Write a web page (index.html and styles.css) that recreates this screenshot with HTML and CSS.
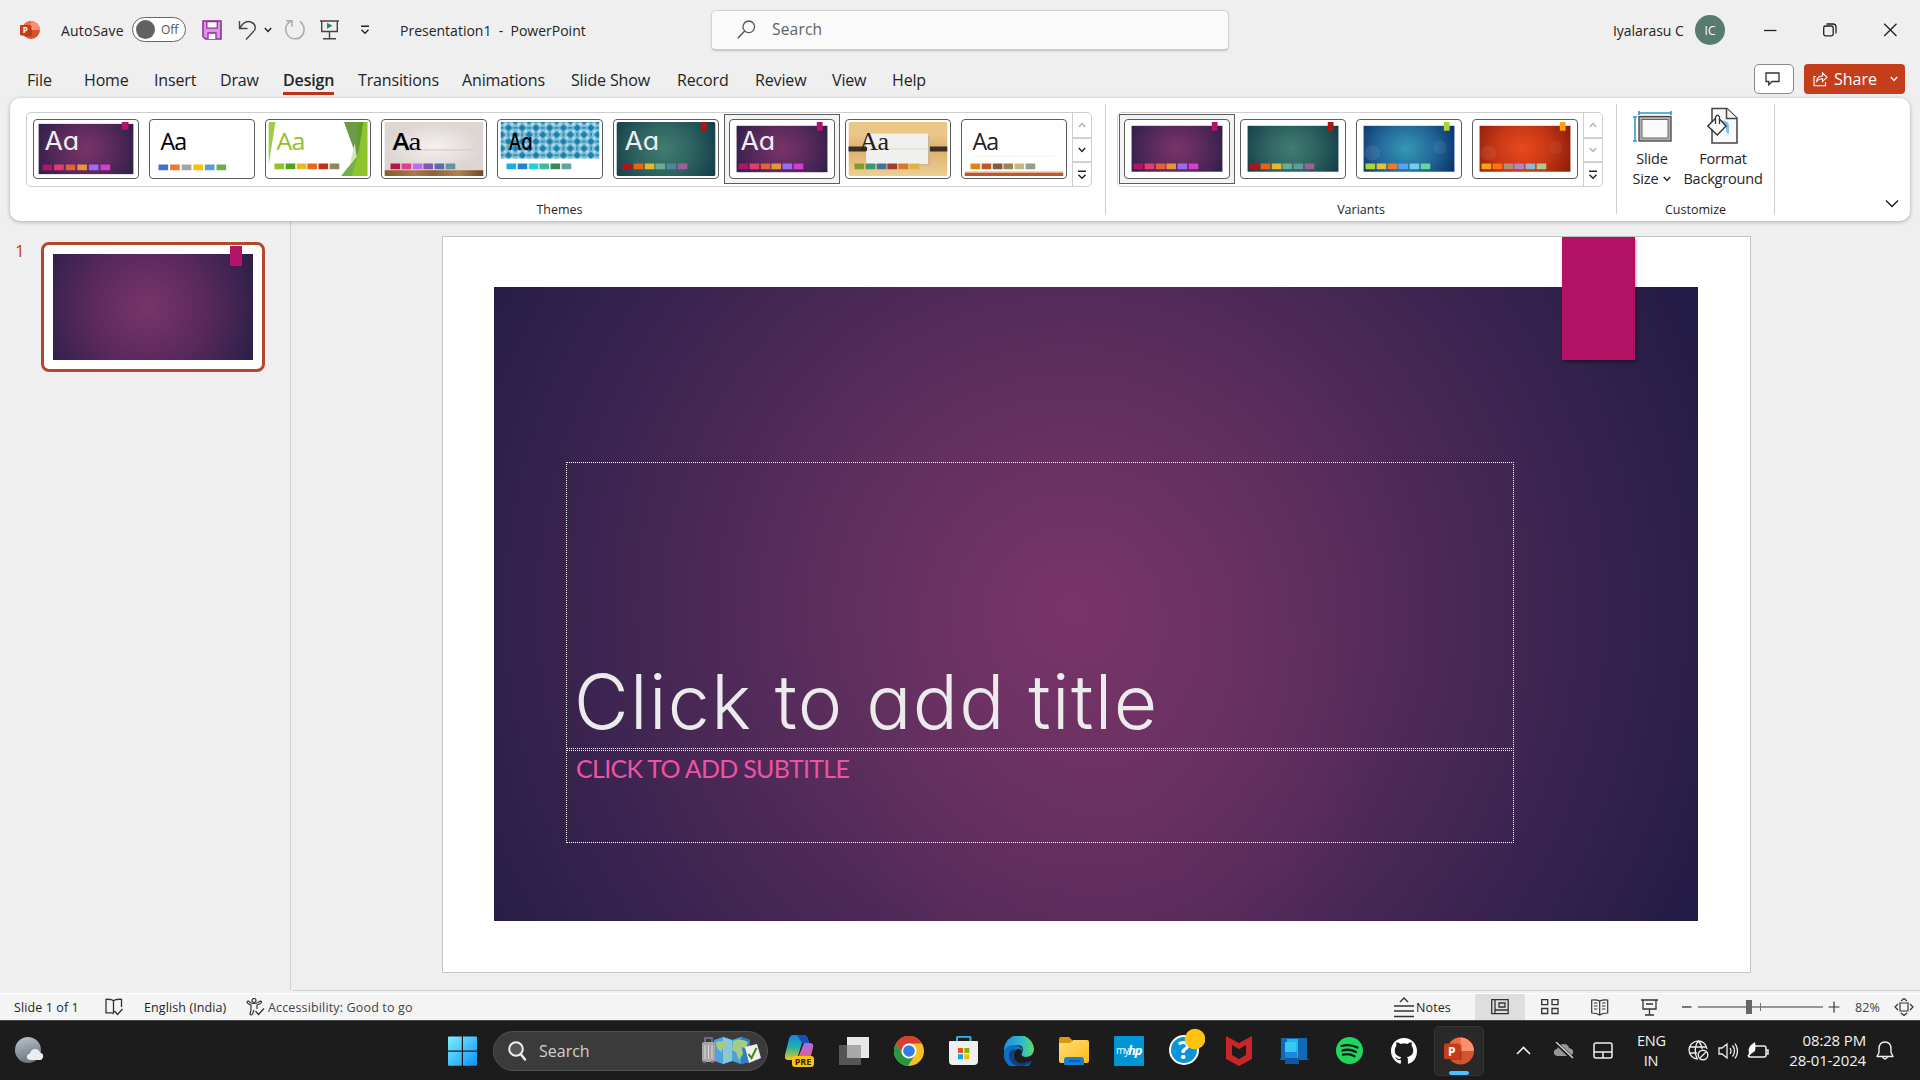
FILE: index.html
```html
<!DOCTYPE html>
<html lang="en">
<head>
<meta charset="utf-8">
<title>Presentation1 - PowerPoint</title>
<link rel="stylesheet" href="styles.css">
</head>
<body>
<svg class="defs" width="0" height="0" aria-hidden="true">
  <defs>
    <radialGradient id="purple" cx=".5" cy=".5" r=".6" gradientTransform="translate(0 -.35) scale(1 1.7)"><stop offset="0" stop-color="#79346a"/><stop offset=".5" stop-color="#59295b"/><stop offset="1" stop-color="#2a1f48"/></radialGradient>
    <radialGradient id="teal" cx=".48" cy=".5" r=".6" gradientTransform="translate(0 -.35) scale(1 1.7)"><stop offset="0" stop-color="#417d70"/><stop offset=".5" stop-color="#2c615f"/><stop offset="1" stop-color="#123b48"/></radialGradient>
    <radialGradient id="blue" cx=".47" cy=".5" r=".6" gradientTransform="translate(0 -.35) scale(1 1.7)"><stop offset="0" stop-color="#3499b3"/><stop offset=".5" stop-color="#23699a"/><stop offset="1" stop-color="#0c306c"/></radialGradient>
    <radialGradient id="red" cx=".47" cy=".5" r=".6" gradientTransform="translate(0 -.35) scale(1 1.7)"><stop offset="0" stop-color="#e84a1e"/><stop offset=".5" stop-color="#c73715"/><stop offset="1" stop-color="#8a1c06"/></radialGradient>
    <linearGradient id="wood"><stop offset="0" stop-color="#8a5a30"/><stop offset=".3" stop-color="#a9794a"/><stop offset=".5" stop-color="#8c6238"/><stop offset=".75" stop-color="#ad8352"/><stop offset="1" stop-color="#704620"/></linearGradient>
    <radialGradient id="plaster"><stop offset="0" stop-color="#f4f1ef"/><stop offset="1" stop-color="#dcd5d2"/></radialGradient>
    <linearGradient id="maple" x2="0" y2="1"><stop offset="0" stop-color="#e9c787"/><stop offset=".25" stop-color="#ebc689"/><stop offset=".5" stop-color="#e0ae6c"/><stop offset="1" stop-color="#edcf94"/></linearGradient>
    <pattern id="tiles" x="3" y="1" width="14.200" height="14.200" patternUnits="userSpaceOnUse"><rect width="14.200" height="14.200" fill="#86c0d8"/><path d="M7.100 3.200L11 7.100 7.100 11 3.200 7.100zM0-3.900L3.900 0 0 3.900zM14.200-3.900v7.800L10.300 0zM0 10.300l3.900 3.900L0 18.100zM14.200 10.300v7.800l-3.900-3.900z" fill="#1581ae"/><path d="M7.100-2v4M7.100 12v4M-2 7.100h4M12 7.100h4" stroke="#1581ae" stroke-width="1.500"/><circle cx="3.550" cy="3.550" r="1.100" fill="#e4f2f7"/><circle cx="10.650" cy="3.550" r="1.100" fill="#e4f2f7"/><circle cx="3.550" cy="10.650" r="1.100" fill="#e4f2f7"/><circle cx="10.650" cy="10.650" r="1.100" fill="#e4f2f7"/></pattern>
    <linearGradient id="win" x2="1" y2="1"><stop offset="0" stop-color="#7ff0ff"/><stop offset="1" stop-color="#0a92f8"/></linearGradient>
    <linearGradient id="edge1" x2="1" y2="0"><stop offset="0" stop-color="#1b8fd8"/><stop offset=".6" stop-color="#2fb9d2"/><stop offset="1" stop-color="#63dd58"/></linearGradient>
    <linearGradient id="moon" x2=".3" y2="1"><stop offset="0" stop-color="#bcc5cf"/><stop offset="1" stop-color="#6d7883"/></linearGradient>
    <linearGradient id="folder" x2="1" y2="1"><stop offset="0" stop-color="#ffdf7c"/><stop offset="1" stop-color="#ffb915"/></linearGradient>
    <linearGradient id="copA" x2="0" y2="1"><stop offset="0" stop-color="#1783e6"/><stop offset=".5" stop-color="#25b3a0"/><stop offset="1" stop-color="#f5c51c"/></linearGradient>
    <linearGradient id="copB" x2="0" y2="1"><stop offset="0" stop-color="#a66bf0"/><stop offset="1" stop-color="#f4625c"/></linearGradient>
    <symbol id="ppt" viewBox="0 0 30 30"><circle cx="16.500" cy="15" r="13.500" fill="#d35230"/><path d="M16.500 1.500A13.500 13.500 0 0 0 3 15h13.500z" fill="#ed6c47"/><path d="M16.500 1.500A13.500 13.500 0 0 1 30 15H16.500z" fill="#ff8f6b"/><rect x="2" y="8.500" width="15.500" height="15.500" rx="1" fill="#7d210e" opacity=".5"/><rect x="0" y="7.500" width="15.500" height="15.500" rx="1.500" fill="#c43e1c"/><text x="7.800" y="19.800" class="ppt-letter">P</text></symbol>
    <symbol id="down" viewBox="0 0 8 6"><path d="M.8 1L4 4.500 7.200 1" fill="none" stroke="currentColor" stroke-width="1.400"/></symbol>
    <symbol id="up" viewBox="0 0 8 6"><path d="M.8 5L4 1.500 7.200 5" fill="none" stroke="currentColor" stroke-width="1.400"/></symbol>
    <symbol id="more" viewBox="0 0 10 10"><path d="M1 1.200H9M1.500 4.700L5 8.300 8.500 4.700" fill="none" stroke="currentColor" stroke-width="1.400"/></symbol>
  </defs>
</svg>
<div class="app">
  <header class="titlebar">
    <svg class="i20" viewBox="0 0 30 30"><use href="#ppt"/></svg>
    <span class="autosave">AutoSave</span>
    <span class="toggle"><i></i>Off</span>
    <svg class="i20" viewBox="0 0 20 20"><path d="M1 1h18v18H3.500L1 16.500z" fill="#d79bdc" stroke="#932d9e" stroke-width="1.600"/><path d="M4.800 1.500h10.500v6.700H4.800z" fill="#fafafa" stroke="#932d9e" stroke-width="1.300"/><path d="M6 19v-6h8v6" fill="#fafafa" stroke="#932d9e" stroke-width="1.300"/></svg>
    <svg width="20" height="20" viewBox="0 0 20 20"><path d="M1.500 1v7.500h8M2 8C5 2.500 9 .5 13 2c5 2 5.500 7 2 10L8 19.500" fill="none" stroke="#444" stroke-width="1.400"/></svg>
    <svg width="8" height="6"><use href="#down"/></svg>
    <svg class="i20" viewBox="0 0 20 20"><path d="M1 .8h6v6M6.500 1C.5 3.500-.5 9.500 2 14c3 6 12 6.500 15.500 1 3-5 1.500-11-2.500-13.500" fill="none" stroke="#aaa" stroke-width="1.500"/></svg>
    <svg class="i20" viewBox="0 0 20 20"><path d="M0 1h19M1.700 1v10.500h15.600V1M9.500 12v6.500M3 18.700h13" fill="none" stroke="#444" stroke-width="1.400"/><path d="M7 2.800v6l5.500-3z" fill="#1f9349"/></svg>
    <svg width="10" height="10"><use href="#more"/></svg>
    <span class="doc-title">Presentation1&nbsp; -&nbsp; PowerPoint</span>
    <div class="search"><svg width="19" height="19" viewBox="0 0 19 19"><circle cx="11.800" cy="6.800" r="5.800" fill="none" stroke="#555" stroke-width="1.300"/><path d="M7.700 11L.8 18.200" stroke="#555" stroke-width="1.400"/></svg><span>Search</span></div>
    <span class="user">Iyalarasu C</span>
    <span class="avatar">IC</span>
    <svg width="13" height="13"><path d="M0 6.500h12.500" stroke="#222" stroke-width="1.300"/></svg>
    <svg width="14" height="14" viewBox="0 0 14 14"><rect x=".7" y="3" width="9.500" height="9.800" rx="1.800" fill="none" stroke="#222" stroke-width="1.300"/><path d="M3.500 1h6.500q3 0 3 3v6.500" fill="none" stroke="#222" stroke-width="1.300"/></svg>
    <svg width="14" height="14"><path d="M.2.700l12.300 12.300M12.500 .7L.2 13" stroke="#222" stroke-width="1.300"/></svg>
  </header>
  <div class="tabrow">
    <nav class="tabs"><span>File</span><span>Home</span><span>Insert</span><span>Draw</span><span class="active">Design</span><span>Transitions</span><span>Animations</span><span>Slide Show</span><span>Record</span><span>Review</span><span>View</span><span>Help</span></nav>
    <button class="comment"><svg width="16" height="14" viewBox="0 0 16 14"><path d="M1 1h13v8.500H7L3.800 12.800V9.500H1z" fill="none" stroke="#333" stroke-width="1.300"/></svg></button>
    <button class="share"><svg width="15" height="16" viewBox="0 0 15 16"><path d="M3 5.500H1v9.300h11.500V11M3.500 10.500C4 7 6 5 9.500 5V1.800L14 6.300 9.500 10.500V7.800c-3 0-4.500.8-6 2.700z" fill="none" stroke="#fff" stroke-width="1.100"/></svg><span>Share</span><svg class="chev" width="8" height="6"><use href="#down"/></svg></button>
  </div>
  <section class="ribbon">
    <div class="group themes">
      <div class="gallery">
        <div class="items">
          <div class="cell"><svg class="thumb" viewBox="0 0 106 60"><rect x="4" y="4" width="98" height="52" fill="url(#purple)"/><path fill="#b51368" d="M90 2h7v8h-7z"/><text class="aa gothic" x="10" y="31" fill="#eee" textLength="36" lengthAdjust="spacingAndGlyphs">Aa</text><path fill="#b51368" d="M8 46h10v6H8z"/><path fill="#e33d6f" d="M20 46h10v6H20z"/><path fill="#e45f3c" d="M32 46h10v6H32z"/><path fill="#e99436" d="M44 46h10v6H44z"/><path fill="#9b6bf2" d="M56 46h10v6H56z"/><path fill="#d53dd0" d="M68 46h10v6H68z"/></svg></div>
          <div class="cell"><svg class="thumb" viewBox="0 0 106 60"><text class="aa" x="10" y="31">Aa</text><path fill="#4472c4" d="M8 46h10v6H8z"/><path fill="#ed7d31" d="M20 46h10v6H20z"/><path fill="#a5a5a5" d="M32 46h10v6H32z"/><path fill="#ffc000" d="M44 46h10v6H44z"/><path fill="#5b9bd5" d="M56 46h10v6H56z"/><path fill="#70ad47" d="M68 46h10v6H68z"/></svg></div>
          <div class="cell"><svg class="thumb" viewBox="0 0 106 60"><path d="M2 2h7L2 46z" fill="#9fcc4b"/><path d="M80 2h24v56H77l16-20z" fill="#7fbe36"/><path d="M80 2h14l3 18-4 18z" fill="#6b9a4a"/><path d="M94 2h6l-6 34z" fill="#5b9e28"/><path d="M100 2h4v56H88l7-20z" fill="#90c42c"/><path d="M91 24l2 14-7 8z" fill="#d2e7b2"/><path d="M77 58l16-20-5 20z" fill="#71b04b"/><text class="aa medium" x="10" y="31" fill="#90c226" textLength="29" lengthAdjust="spacingAndGlyphs">Aa</text><path fill="#90c226" d="M8 45h10v6H8z"/><path fill="#54a021" d="M19.500 45h10v6h-10z"/><path fill="#e6b91e" d="M31 45h10v6H31z"/><path fill="#e76618" d="M42 45h10v6H42z"/><path fill="#c42f1a" d="M53.500 45h10v6h-10z"/><path fill="#918655" d="M65 45h10v6H65z"/></svg></div>
          <div class="cell"><svg class="thumb" viewBox="0 0 106 60"><path fill="url(#plaster)" d="M2 2h102v51H2z"/><path fill="url(#wood)" d="M2 52h102v6H2z"/><path d="M22 31h72" stroke="#e3bcc6"/><text class="aa bold" x="10" y="31" textLength="29" lengthAdjust="spacingAndGlyphs">A<tspan class="serif">a</tspan></text><path fill="#b31645" d="M8 45h10v6H8z"/><path fill="#dd3f8b" d="M19.500 45h10v6h-10z"/><path fill="#bb6cf5" d="M31 45h10v6H31z"/><path fill="#7b58a9" d="M42 45h10v6H42z"/><path fill="#5b6aa8" d="M53.500 45h10v6h-10z"/><path fill="#6592a4" d="M65 45h10v6H65z"/></svg></div>
          <div class="cell"><svg class="thumb" viewBox="0 0 106 60"><path fill="url(#tiles)" d="M2 2h102v38H2z"/><text class="aa single" x="10" y="31" textLength="25" lengthAdjust="spacingAndGlyphs">Aa</text><path fill="#1cade4" d="M8 45h10v6H8z"/><path fill="#2683c6" d="M19.500 45h10v6h-10z"/><path fill="#27ced7" d="M31 45h10v6H31z"/><path fill="#42ba97" d="M42 45h10v6H42z"/><path fill="#3e8853" d="M53.500 45h10v6h-10z"/><path fill="#62a39f" d="M65 45h10v6H65z"/></svg></div>
          <div class="cell"><svg class="thumb" viewBox="0 0 106 60"><rect x="2" y="2" width="102" height="56" rx="2" fill="url(#teal)"/><path fill="#b01513" d="M89 2h6v9h-6z"/><text class="aa gothic" x="10" y="31" fill="#eee" textLength="36" lengthAdjust="spacingAndGlyphs">Aa</text><path fill="#b01513" d="M8 45h10v6H8z"/><path fill="#ea6312" d="M19.500 45h10v6h-10z"/><path fill="#e6b729" d="M31 45h10v6H31z"/><path fill="#6aac90" d="M42 45h10v6H42z"/><path fill="#54849a" d="M53.500 45h10v6h-10z"/><path fill="#9e5e9b" d="M65 45h10v6H65z"/></svg></div>
          <div class="cell selected"><svg class="thumb" viewBox="0 0 106 60"><rect x="6" y="6" width="94" height="48" fill="url(#purple)"/><path fill="#b51368" d="M89 2h6v9h-6z"/><text class="aa gothic" x="10" y="31" fill="#eee" textLength="36" lengthAdjust="spacingAndGlyphs">Aa</text><path fill="#b51368" d="M8 45h10v6H8z"/><path fill="#e33d6f" d="M19.500 45h10v6h-10z"/><path fill="#e45f3c" d="M31 45h10v6H31z"/><path fill="#e99436" d="M42 45h10v6H42z"/><path fill="#9b6bf2" d="M53.500 45h10v6h-10z"/><path fill="#d53dd0" d="M65 45h10v6H65z"/></svg></div>
          <div class="cell"><svg class="thumb" viewBox="0 0 106 60"><rect x="2" y="2" width="102" height="56" rx="2" fill="url(#maple)"/><path d="M2 27.500h102v5H2z" fill="#3a302b"/><path d="M22 16h64v31H22z" fill="#c9b899"/><path d="M20 14h64v31.500H20z" fill="#f0f0ef"/><path d="M20 30h64" stroke="#d6d6d0"/><path d="M2 28h19v4H2z" fill="#3a302b"/><text class="aa serif" x="13" y="31" fill="#222">Aa</text><path fill="#83992a" d="M8 45h10v6H8z"/><path fill="#3c9770" d="M19.500 45h10v6h-10z"/><path fill="#44709d" d="M31 45h10v6H31z"/><path fill="#a23c33" d="M42 45h10v6H42z"/><path fill="#d97828" d="M53.500 45h10v6h-10z"/><path fill="#deb340" d="M65 45h10v6H65z"/></svg></div>
          <div class="cell"><svg class="thumb" viewBox="0 0 106 60"><path d="M12 37.500h83" stroke="#eee"/><path fill="#f1c8a8" d="M2 53h102v2H2z"/><path fill="#bd582c" d="M2 54.500h102V58H2z"/><text class="aa" x="10" y="31" fill="#222">Aa</text><path fill="#e48312" d="M8 45h10v6H8z"/><path fill="#bd582c" d="M19.500 45h10v6h-10z"/><path fill="#865640" d="M31 45h10v6H31z"/><path fill="#9b8357" d="M42 45h10v6H42z"/><path fill="#c2bc80" d="M53.500 45h10v6h-10z"/><path fill="#94a088" d="M65 45h10v6H65z"/></svg></div>
        </div>
        <div class="scroll"><span class="off"><svg width="8" height="6"><use href="#up"/></svg></span><span><svg width="8" height="6"><use href="#down"/></svg></span><span><svg width="10" height="10"><use href="#more"/></svg></span></div>
      </div>
      <div class="label">Themes</div>
    </div>
    <div class="group variants">
      <div class="gallery">
        <div class="items">
          <div class="cell selected"><svg class="thumb" viewBox="0 0 106 60"><rect x="6" y="6" width="94" height="47.500" fill="url(#purple)"/><path fill="#b51368" d="M89 2h6v9h-6z"/><path fill="#b51368" d="M8 45h10v6H8z"/><path fill="#e33d6f" d="M19.500 45h10v6h-10z"/><path fill="#e45f3c" d="M31 45h10v6H31z"/><path fill="#e99436" d="M42 45h10v6H42z"/><path fill="#9b6bf2" d="M53.500 45h10v6h-10z"/><path fill="#d53dd0" d="M65 45h10v6H65z"/></svg></div>
          <div class="cell"><svg class="thumb" viewBox="0 0 106 60"><rect x="6" y="6" width="94" height="47.500" fill="url(#teal)"/><path fill="#b01513" d="M89 2h6v9h-6z"/><path fill="#b01513" d="M8 45h10v6H8z"/><path fill="#ea6312" d="M19.500 45h10v6h-10z"/><path fill="#e6b729" d="M31 45h10v6H31z"/><path fill="#6aac90" d="M42 45h10v6H42z"/><path fill="#5f9c9d" d="M53.500 45h10v6h-10z"/><path fill="#9e5e9b" d="M65 45h10v6H65z"/></svg></div>
          <div class="cell"><svg class="thumb" viewBox="0 0 106 60"><rect x="6" y="6" width="94" height="47.500" fill="url(#blue)"/><circle cx="15" cy="34" r="8" fill="#fff" opacity=".09"/><circle cx="85" cy="28" r="7" fill="#fff" opacity=".07"/><path fill="#acd433" d="M89 2h6v9h-6z"/><path fill="#acd433" d="M8 45h10v6H8z"/><path fill="#e6c133" d="M19.500 45h10v6h-10z"/><path fill="#ef7a22" d="M31 45h10v6H31z"/><path fill="#5aa2f5" d="M42 45h10v6H42z"/><path fill="#75cdec" d="M53.500 45h10v6h-10z"/><path fill="#63d797" d="M65 45h10v6H65z"/></svg></div>
          <div class="cell"><svg class="thumb" viewBox="0 0 106 60"><rect x="6" y="6" width="94" height="47.500" fill="url(#red)"/><circle cx="15" cy="34" r="8" fill="#fff" opacity=".07"/><circle cx="85" cy="28" r="7" fill="#fff" opacity=".05"/><path fill="#f8a40a" d="M89 2h6v9h-6z"/><path fill="#f8a40a" d="M8 45h10v6H8z"/><path fill="#fd7219" d="M19.500 45h10v6h-10z"/><path fill="#b08d7b" d="M31 45h10v6H31z"/><path fill="#a48ccb" d="M42 45h10v6H42z"/><path fill="#8dbad2" d="M53.500 45h10v6h-10z"/><path fill="#aacb93" d="M65 45h10v6H65z"/></svg></div>
        </div>
        <div class="scroll"><span class="off"><svg width="8" height="6"><use href="#up"/></svg></span><span class="off"><svg width="8" height="6"><use href="#down"/></svg></span><span><svg width="10" height="10"><use href="#more"/></svg></span></div>
      </div>
      <div class="label">Variants</div>
    </div>
    <div class="group customize">
      <div class="tools">
        <div class="tool size"><svg width="40" height="36" viewBox="0 0 40 36"><path d="M7 5h32M7 3v4M39 3v4M3 9v24M1 9h4M1 33h4" stroke="#2b97d8" stroke-width="1.600" fill="none"/><rect x="7" y="8.500" width="32" height="24.500" fill="#b2b2b2" stroke="#444" stroke-width="1.300"/><rect x="10" y="11.500" width="26" height="18.500" fill="#fafafa" stroke="#666"/></svg><span>Slide</span><span class="second">Size <svg width="8" height="6"><use href="#down"/></svg></span></div>
        <div class="tool format"><svg width="32" height="38" viewBox="0 0 32 38"><path d="M5 1.500h15l10 9.500v25H5z" fill="#fafafa" stroke="#444" stroke-width="1.500"/><path d="M19.500 1.500v10H30" fill="#fafafa" stroke="#444" stroke-width="1.500"/><path d="M14 13.500q8 0 8 5.500v8q-4-1-3-6-2-4-5-7.500" fill="#7ebdf0"/><path d="M9 11L.8 19l9.500 9L19 19l-6-6.500" fill="#fff" stroke="#333" stroke-width="1.400"/><path d="M8.500 17V10q2-3.500 4 0v7" fill="#fff" stroke="#333" stroke-width="1.300"/></svg><span>Format</span><span class="second">Background</span></div>
      </div>
      <div class="label">Customize</div>
    </div>
    <svg class="collapse" width="14" height="9" viewBox="0 0 14 9"><path d="M1 1.500l6 6 6-6" fill="none" stroke="#222" stroke-width="1.500"/></svg>
  </section>
  <main class="workspace">
    <aside class="slides"><span class="num">1</span><div class="mini"><div class="mini-bg"></div><div class="mini-tag"></div></div></aside>
    <div class="stage">
      <div class="slide"><div class="slide-bg">
        <div class="title-box">Click to add title</div>
        <div class="sub-box">CLICK TO ADD SUBTITLE</div>
      </div><div class="slide-tag"></div></div>
    </div>
  </main>
  <footer class="status">
    <span>Slide 1 of 1</span>
    <svg width="18" height="18" viewBox="0 0 18 18"><path d="M8.500 3v12M8.500 3Q7 1 1 1.300v13.500h6L8.500 16M8.500 3Q10 1 16.500 1.300V9M9.500 13l3 3.500L17.500 11" fill="none" stroke="#333" stroke-width="1.300"/></svg>
    <span>English (India)</span>
    <svg width="19" height="18" viewBox="0 0 19 18"><circle cx="8" cy="2.500" r="2" fill="none" stroke="#333" stroke-width="1.200"/><path d="M1 4q1-2 3 .5 4 2 8 0 3-2.500 3.500-.5 0 1.500-4.500 3V11M1 4q0 1.500 4 3v5l-1 4q1 2 2.500 0L8 12M9.500 13l3 3.500 5.500-6" fill="none" stroke="#333" stroke-width="1.200"/></svg>
    <span class="access">Accessibility: Good to go</span>
    <svg width="20" height="22" viewBox="0 0 20 22"><path d="M6 6l4-4 4 4M0 10h20M0 15h20M0 20.500h20" fill="none" stroke="#333" stroke-width="1.400"/></svg>
    <span class="notes">Notes</span>
    <span class="view-on"><svg width="18" height="16" viewBox="0 0 18 16"><path d="M.7.700h16.500v14H.7zM4 .7v14M4 11h13M8 4h6v4H8z" fill="none" stroke="#333" stroke-width="1.300"/></svg></span>
    <svg width="18" height="16" viewBox="0 0 18 16"><path d="M.7.700h6v5h-6zM11 .7h6v5h-6zM.7 9.500h6v5h-6zM11 9.500h6v5h-6z" fill="none" stroke="#333" stroke-width="1.300"/></svg>
    <svg width="18" height="17" viewBox="0 0 18 17"><path d="M8.700 2v14M8.700 2Q6 .5.700 1v13q5 0 8 2 3-2 8-2V1q-5-.5-8 1M3 4h3.500M3 7h3.500M3 10h3.500M11 4h3.500M11 7h3.500M11 10h3.500" fill="none" stroke="#333" stroke-width="1.200"/></svg>
    <svg width="17" height="17" viewBox="0 0 17 17"><path d="M0 1h17M2 1v9h13V1M5 5h7M8.500 10v6M4 16h9" fill="none" stroke="#333" stroke-width="1.300"/></svg>
    <svg width="10" height="10"><path d="M0 5h9.500" stroke="#333" stroke-width="1.300"/></svg>
    <svg width="126" height="16"><path d="M0 8h125" stroke="#777" stroke-width="1.300"/><path d="M62.500 4v8" stroke="#777"/><path d="M48 1h6v14h-6z" fill="#666"/></svg>
    <svg width="12" height="12"><path d="M.5 6h11M6 .5v11" stroke="#333" stroke-width="1.200"/></svg>
    <span class="zoom">82%</span>
    <svg width="20" height="18" viewBox="0 0 20 18"><path d="M6 5h8v8H6zM7 3l3-2.500L13 3M7 15l3 2.500 3-2.500M4 6L1 9l3 3M16 6l3 3-3 3" fill="none" stroke="#333" stroke-width="1.200"/></svg>
  </footer>
  <footer class="taskbar">
    <svg width="30" height="28" viewBox="0 0 30 28"><circle cx="13" cy="13" r="13" fill="url(#moon)"/><path d="M15 23q-4-1-3-4 .5-2.500 3-2.500Q16 12 20 12t5 3.500q4 1 3 5Q27 23 25 23z" fill="#e9eef3"/></svg>
    <svg width="30" height="30" viewBox="0 0 30 30"><path d="M0 1.500Q0 .5 1 .5h12.800v14H0zM15 .5h13q1 0 1 1v13H15zM0 15.700h13.800v14H1q-1 0-1-1zM15 15.700h14v13q0 1-1 1H15z" fill="url(#win)"/></svg>
    <div class="tsearch"><svg width="20" height="20" viewBox="0 0 20 20"><circle cx="8" cy="8" r="6.800" fill="#565656" stroke="#eee" stroke-width="2"/><path d="M13 13.500l4 5" stroke="#eee" stroke-width="2.400" stroke-linecap="round"/></svg><span>Search</span>
      <svg class="map" width="59" height="31" viewBox="0 0 59 31"><path d="M12 5l9-3 9 3 9-3 9 3v22l-9 2-9-3-9 3-9-3z" fill="#4ba4dc"/><path d="M21 2l9 3v21l-9 3z" fill="#83c6ea"/><path d="M39 2l9 3v22l-9 2z" fill="#2c7fc0"/><path d="M14 7q7-2 13 1l-5 5q-3 1-2 4-6-2-6-10M22 18q6-1 5 2l-4 6zM31 6q8-3 15 1l-2 7-4-2 1 7-4 6-3-8-4-2z" fill="#a6cc83"/><path d="M3 8V3h7v5" fill="none" stroke="#8c74a8" stroke-width="1.500"/><rect x="0" y="7" width="13" height="20" rx="2" fill="#a7a3a7"/><path d="M3 10v14M6.500 10v14M10 10v14" stroke="#dadada"/><path d="M1 27h3M9 27h3" stroke="#7e5fa0" stroke-width="2"/><path d="M43 12l12-3 4 14-12 5z" fill="#f1eef6"/><path d="M46.500 19l3 4 5-10" fill="none" stroke="#35910b" stroke-width="2"/></svg></div>
    <svg width="30" height="34" viewBox="0 0 30 34"><path d="M8 1h11q3 0 4 4l1 4h-7l-4 13q-1 4-5 4H3q-4 0-3-5L4 5Q5 1 8 1" fill="url(#copA)"/><path d="M12 1h7q3 0 4 4l1 4h-7z" fill="#174dbd"/><path d="M19 9h6q4 0 3 5l-4 15H14l-3-5h2z" fill="url(#copB)"/><rect x="7" y="22" width="22" height="11" rx="3" fill="#ffc20e"/><text class="pre" x="18" y="31">PRE</text></svg>
    <svg width="30" height="30"><path d="M8 1h22v21H8z" fill="#e8e8e8"/><path d="M0 9h22v20H0z" fill="#555"/><path d="M8 9h14v13H8z" fill="#a8a8a8"/></svg>
    <svg width="30" height="30" viewBox="0 0 30 30"><circle cx="15" cy="15" r="15" fill="#f9bf28"/><path d="M2 7.500A15 15 0 0 1 28 7.500H15a7.500 7.500 0 0 0-6.500 11z" fill="#db3b31"/><path d="M2 7.500A15 15 0 0 0 14 30l7.500-12a7.500 7.500 0 0 1-13 .700z" fill="#279747"/><circle cx="15" cy="15" r="7.500" fill="#fff"/><circle cx="15" cy="15" r="5.800" fill="#347de7"/></svg>
    <svg width="30" height="30" viewBox="0 0 30 30"><path d="M8 7V2q0-1.200 1.200-1.200h11Q21.500.8 21.500 2v5" fill="none" stroke="#31b4ec" stroke-width="2"/><path d="M1 5h27q1 0 1 1v19q0 4-4 4H4q-4 0-4-4V6q0-1 1-1" fill="#f0f0f0"/><path fill="#f05123" d="M9 12h5v5H9z"/><path fill="#7eb900" d="M15.300 12h5v5h-5z"/><path fill="#05a6f0" d="M9 18.200h5v5H9z"/><path fill="#fdb900" d="M15.300 18.200h5v5h-5z"/></svg>
    <svg width="30" height="30" viewBox="0 0 30 30"><path d="M0 15A15 15 0 0 1 30 13q0 7-8 8-6-1-4-4 3-8-5-8Q4 9 0 15" fill="url(#edge1)"/><path d="M0 15q4-7 12-6 7 1 6 6-3-4-7 0-4 8 4 13 7 3 13-3A15 15 0 0 1 0 15" fill="#116fc3"/><path d="M11 15q-3 4-1 8 4 7 13 3 3-1 4-1-4 6-12 5-9-1-10-10-.500-6 6-7z" fill="#0c3f8d"/></svg>
    <svg width="30" height="30" viewBox="0 0 30 30"><path d="M0 3q0-2 2-2h8l3 3v6H0z" fill="#d89a0c"/><path d="M0 7h11l3-3h14q2 0 2 2v19q0 2-2 2H2q-2 0-2-2z" fill="url(#folder)"/><path d="M5 29v-5q0-3 3-3h14q3 0 3 3v5z" fill="#1280d4"/><path d="M10 25h11" stroke="#0859a3" stroke-width="1.500"/></svg>
    <svg width="30" height="30"><rect width="30" height="30" rx="1" fill="#0096d6"/><text class="my" x="2" y="18">my</text><text class="hp" x="14" y="19">hp</text></svg>
    <svg class="help" width="36" height="40" viewBox="0 0 36 40"><circle cx="15" cy="23" r="14" fill="#0b94d9" stroke="#fff" stroke-width="2"/><text class="q" x="15" y="32">?</text><circle cx="26" cy="12" r="10.300" fill="#ffc20e"/></svg>
    <svg width="28" height="30" viewBox="0 0 28 30"><path d="M1 0l13 7L27 0v23l-13 7-13-7zM7 9v10l7 4 7-4V9l-7 4z" fill="#c8262c" fill-rule="evenodd"/></svg>
    <svg width="30" height="28" viewBox="0 0 30 28"><path d="M1 1h26v20l2 2H-1l2-2z" fill="#1168b5"/><path d="M7 2h11v20H7z" fill="#20b7ec"/><path d="M5 5h11v18H5z" fill="#36c9f4"/><path d="M5 15h12v6H5z" fill="#1d86d8"/><path d="M5 21h14v6H5z" fill="#0b58a3"/></svg>
    <svg width="27" height="27" viewBox="0 0 27 27"><circle cx="13.500" cy="13.500" r="13.500" fill="#1ed760"/><path d="M5.500 9q8-2.500 16 1.500M6.500 13.500q7-2 13.500 1.500M7 17.700q6-1.500 11.500 1.500" fill="none" stroke="#171717" stroke-width="2.300" stroke-linecap="round"/></svg>
    <svg width="28" height="28" viewBox="0 0 28 28"><path d="M14 1C6.500 1 1 6.800 1 14c0 6 3.800 11 9 12.800.6.200.9-.3.900-.800v-3c-4 .8-4.700-1.500-5.600-3 2 .500 2 2.500 5 2 .1-1 .600-1.600 1-2-4.500-.7-6.500-3-6.500-6.500 0-2 .5-3.500 1.600-4.500-.3-1-.3-2.500.2-3.700 1.400 0 2.800.9 3.900 1.600 2.300-.600 4.700-.6 7 0 1.100-.7 2.500-1.600 3.900-1.600.5 1.200.5 2.700.2 3.700 1.100 1 1.600 2.500 1.600 4.500 0 3.500-2 5.800-6.300 6.500.6.500 1 1.400 1 2.600V26c0 .5.300 1 .9.800A13.500 13.500 0 0 0 27 14C27 6.800 21.500 1 14 1" fill="#fff"/></svg>
    <div class="running"><svg width="30" height="30" viewBox="0 0 30 30"><use href="#ppt"/></svg><i></i></div>
    <svg width="15" height="10"><path d="M1 8l6.500-6.500L14 8" fill="none" stroke="#eee" stroke-width="1.600"/></svg>
    <svg width="21" height="17" viewBox="0 0 21 17"><path d="M4 14q-4-1-3-5 1-2 3-2 2-5 7-5 4 0 5 4 5 1 4 5-1 3-4 3z" fill="#969696"/><path d="M2 0l18 17" stroke="#1c1c1c" stroke-width="3.500"/><path d="M3 0l17 16" stroke="#ddd" stroke-width="1.300"/></svg>
    <svg width="20" height="17" viewBox="0 0 20 17"><path d="M3 1h14q2 0 2 2v11q0 2-2 2H3q-2 0-2-2V3q0-2 2-2M1 10h18M10 10v6" fill="none" stroke="#eee" stroke-width="1.500"/></svg>
    <span class="lang">ENG<br>IN</span>
    <svg width="21" height="21" viewBox="0 0 21 21"><path d="M10 19A9 9 0 1 1 19 9M1 7h17M1 13h8M10 1q-5 8-1 18M10 1q4 4 4 8" fill="none" stroke="#eee" stroke-width="1.300"/><circle cx="15" cy="15" r="4.800" fill="#1c1c1c" stroke="#eee" stroke-width="1.400"/><path d="M12 18l6-6" stroke="#eee" stroke-width="1.300"/></svg>
    <svg width="20" height="18" viewBox="0 0 20 18"><path d="M1 6h3l5-4v14l-5-4H1zM12 6q2 3 0 6M14.500 3.500q4 5.500 0 11M17 1.500q5 7.500 0 15" fill="none" stroke="#eee" stroke-width="1.300"/></svg>
    <svg class="battery" width="22" height="18" viewBox="0 0 22 18"><path d="M8 4h9q2 0 2 2v7q0 2-2 2H3q-1.500 0-2-2M19.500 8H21v4h-1.500" fill="none" stroke="#eee" stroke-width="1.500"/><path d="M8 0q2 10-3 11l-4 4 1-5q-2-5 6-10" fill="#fff"/></svg>
    <span class="clock">08:28 PM<br>28-01-2024</span>
    <svg class="bell" width="18" height="20" viewBox="0 0 18 20"><path d="M1 15.500l2-4V8q0-7 6-7t6 7v3.500l2 4zM6.500 16q2.500 4 5 0" fill="none" stroke="#eee" stroke-width="1.400" stroke-linejoin="round"/></svg>
  </footer>
</div>
</body>
</html>
```

FILE: styles.css
```css
* { box-sizing: border-box; }
body { margin: 0; background: #efefef; color: #242424; font-family: "Open Sans", "Noto Sans", sans-serif; overflow: hidden; }
svg { display: block; flex: none; }
.defs { position: absolute; }
.app { width: 1920px; height: 1080px; display: grid; grid-template-rows: 60px 38px 123px 772px 27px 60px; }
.i20 { width: 20px; height: 20px; }
.ppt-letter { font: bold 12px "Open Sans", sans-serif; fill: #fff; text-anchor: middle; }

.titlebar { display: grid; grid-template-columns: 41px 71px 70px 36px 26px 21px 35px 40px 40px 311px 902px 82px 69px 59px 61px 20px; padding-left: 20px; align-items: center; font-size: 14px; white-space: nowrap; }
.autosave { letter-spacing: 0.2px; }
.doc-title { letter-spacing: 0; }
.user { letter-spacing: -0.05px; }
.toggle { width: 54px; height: 25px; margin-top: -1px; border: 1px solid #666; border-radius: 13px; background: #fff; display: flex; align-items: center; gap: 6px; padding-left: 3px; font-size: 12px; color: #555; }
.toggle i { width: 19px; height: 19px; border-radius: 50%; background: #616161; }
.search { width: 518px; height: 41px; border: 1px solid #d2d2d2; border-bottom: 2px solid #cacaca; border-radius: 5px; background: #fafafa; display: flex; align-items: center; gap: 16px; padding: 0 0 1px 25px; font-size: 15.500px; color: #616161; box-shadow: 0 1px 2px #ddd; }
.search span { letter-spacing: 0.2px; }
.avatar { width: 30px; height: 30px; border-radius: 50%; background: #567b71; color: #fff; font-size: 12px; display: grid; place-items: center; }

.tabrow { display: flex; padding: 4px 15px 0 27px; align-items: flex-start; }
.tabs { width: 1727px; display: grid; grid-template-columns: 57px 70px 66px 63px 75px 104px 109px 106px 78px 77px 60px 60px; font-size: 16px; letter-spacing: -0.15px; white-space: nowrap; }
.tabs span { line-height: 33px; height: 31px; justify-self: start; }
.tabs .active { font-weight: 600; border-bottom: 3px solid #b7351b; letter-spacing: -0.15px; }
button { font: inherit; padding: 0; }
.comment { width: 40px; height: 30px; border: 1px solid #8a8a8a; border-radius: 5px; background: #fff; display: flex; align-items: center; padding-left: 10px; }
.share { width: 101px; height: 30px; margin-left: 10px; border: 0; border-radius: 4px; background: #c43e1c; color: #fff; display: flex; align-items: center; padding-left: 9px; gap: 6px; font-size: 16px; letter-spacing: 0; }
.share .chev { margin-left: 7px; }

.ribbon { margin: 0 10px; background: #fff; border-radius: 10px; box-shadow: 0 1px 4px rgba(0,0,0,.28); display: flex; padding-top: 6px; position: relative; z-index: 1; }
.group { height: 110px; border-right: 1px solid #ccc; display: flex; flex-direction: column; justify-content: space-between; }
.themes { width: 1096px; padding-left: 16px; }
.variants { width: 511px; padding-left: 11px; }
.customize { width: 158px; }
.gallery { height: 75px; margin-top: 8px; border: 1px solid #cfcfcf; border-radius: 5px; display: flex; justify-content: space-between; }
.themes .gallery { width: 1066px; }
.variants .gallery { width: 486px; }
.items { display: flex; padding: 1px 0 0 1px; }
.cell { width: 116px; height: 70px; padding: 5px; }
.selected { outline: 1px solid #5c5c5c; outline-offset: -1px; background: #f3f3f3; }
.thumb { width: 106px; height: 60px; border: 1px solid #5c5c5c; border-radius: 4px; background: #fff; }
.aa { font: 400 24px "Open Sans", sans-serif; letter-spacing: -0.8px; }
.aa.medium { font-weight: 500; }
.aa.gothic { font-family: Inter, sans-serif; font-weight: 400; font-size: 26px; letter-spacing: 0; font-feature-settings: "cv11"; }
.aa.single { font-family: Inter, sans-serif; font-weight: 500; letter-spacing: 0; font-feature-settings: "cv11"; }
.aa.bold { font-weight: 600; }
.aa.serif, .serif { font-family: "Liberation Serif", serif; font-size: 27px; font-weight: 400; }
.scroll { width: 19px; border-left: 1px solid #cfcfcf; display: grid; grid-template-rows: 26px 24px 1fr; }
.scroll span { display: grid; place-items: center; border-bottom: 2px solid #d0d0d0; }
.scroll span:last-child { border: 0; }
.scroll .off { color: #b2b2b2; }
.label { font-size: 12.500px; line-height: 12px; text-align: center; letter-spacing: 0; position: relative; top: 2px; }
.themes .label { padding-right: 12px; }
.variants .label { padding-right: 11px; }
.tools { display: flex; }
.tool { display: flex; flex-direction: column; align-items: center; font-size: 14.500px; line-height: 20px; letter-spacing: -0.2px; }
.tool.size { width: 70px; }
.tool.format { width: 74px; margin-left: -1px; }
.tool > svg { margin-top: 3px; height: 38px; margin-bottom: 4px; }
.second { display: flex; align-items: center; gap: 5px; white-space: nowrap; }
.collapse { align-self: flex-end; margin: 0 0 13px 110px; }

.workspace { display: grid; grid-template-columns: 291px 1fr; }
.slides { border-right: 1px solid #d0d0d0; height: 769px; padding: 21px 0 0 14px; display: flex; }
.num { width: 27px; padding-left: 1px; color: #c43e1c; font-size: 17px; line-height: 18px; }
.mini { width: 224px; height: 130px; border: 3px solid #b7472a; border-radius: 8px; background: #fff; position: relative; padding: 9px; }
.mini-bg { height: 106px; background: radial-gradient(circle 118px at 47% 50%, #79346a, #59295b 50%, #2a1f48); }
.mini-tag { position: absolute; left: 186px; top: 1px; width: 12px; height: 20px; background: #b51368; }
.stage { margin-left: 2px; height: 770px; border-bottom: 1px solid #d2d2d2; padding: 15px 0 0 149px; }
.slide { width: 1309px; height: 737px; background: #fff; border: 1px solid #c6c6c6; position: relative; padding: 50px 52px 50px 51px; }
.slide-bg { height: 634px; padding: 175px 0 0 72px; background: radial-gradient(ellipse 260px 330px at 52% 80%, rgba(122,50,104,.35), transparent), radial-gradient(circle 690px at 48% 51%, #7a346a 0, #62305f 30%, #4b2856 55%, #33224c 80%, #231c46); }
.slide-tag { position: absolute; left: 1119px; top: 0; width: 73px; height: 123px; background: #b31166; box-shadow: 1px 2px 3px rgba(0,0,0,.4); }
.title-box, .sub-box { width: 948px; border: 1px dotted #fff; white-space: nowrap; }
.title-box { height: 287px; display: flex; align-items: flex-end; padding: 0 0 0 7px; font: 300 75px/92px Inter, sans-serif; font-feature-settings: "cv11"; color: #ebebeb; letter-spacing: 1.4px; }
.sub-box { height: 93px; margin-top: 1px; padding: 2px 0 0 9px; font: 25px/30px Lato, sans-serif; letter-spacing: -0.7px; color: #ee52a4; }

.status { display: grid; grid-template-columns: 91px 39px 102px 22px 1126px 22px 59px 66px 50px 50px 41px 16px 130px 27px 39px 26px; padding-left: 14px; align-items: center; background: #f4f4f4; border-top: 1px solid #fff; font-size: 12.500px; white-space: nowrap; letter-spacing: 0.1px; }
.access { letter-spacing: 0.15px; }
.access, .zoom { color: #444; }
.view-on { width: 50px; height: 26px; background: #dedede; display: grid; place-items: center; }

.taskbar { display: grid; grid-template-columns: 433px 45px 292px 54px 55px 55px 55px 55px 55px 55px 56px 55px 56px 54px 44px 82px 37px 40px 44px 51px 30px 30px 37px 91px 30px; grid-template-rows: 59px; padding-left: 15px; align-items: center; background: #1c1c1c; border-top: 1px solid #454545; color: #f2f2f2; white-space: nowrap; }
.tsearch { width: 275px; height: 40px; border: 1px solid #505050; border-radius: 20px; background: #3b3b3b; display: flex; align-items: center; padding: 0 6px 0 14px; font-size: 16px; color: #d0d0d0; letter-spacing: 0; }
.tsearch span { margin-left: 11px; }
.map { margin-left: auto; }
.pre { font: bold 9px "Open Sans", sans-serif; fill: #222; text-anchor: middle; }
.my { font: 10px "Open Sans", sans-serif; fill: #fff; letter-spacing: -1px; }
.hp { font: italic bold 13px "Open Sans", sans-serif; fill: #fff; letter-spacing: -1px; }
.q { font: bold 25px "Open Sans", sans-serif; fill: #fff; text-anchor: middle; }
.help { align-self: start; margin-top: 6px; }
.running { width: 50px; height: 50px; border: 1px solid #343434; border-radius: 5px; background: #292929; display: flex; flex-direction: column; align-items: center; padding-top: 9px; gap: 5px; }
.running i { width: 20px; height: 4px; border-radius: 2px; background: #4cc2ff; }
.lang { font-size: 14.500px; line-height: 20px; width: 28px; text-align: center; letter-spacing: -0.2px; }
.battery { margin-left: -1px; }
.clock { font-size: 15px; line-height: 20px; width: 81px; text-align: right; letter-spacing: -0.15px; margin-top: -1px; }
```
